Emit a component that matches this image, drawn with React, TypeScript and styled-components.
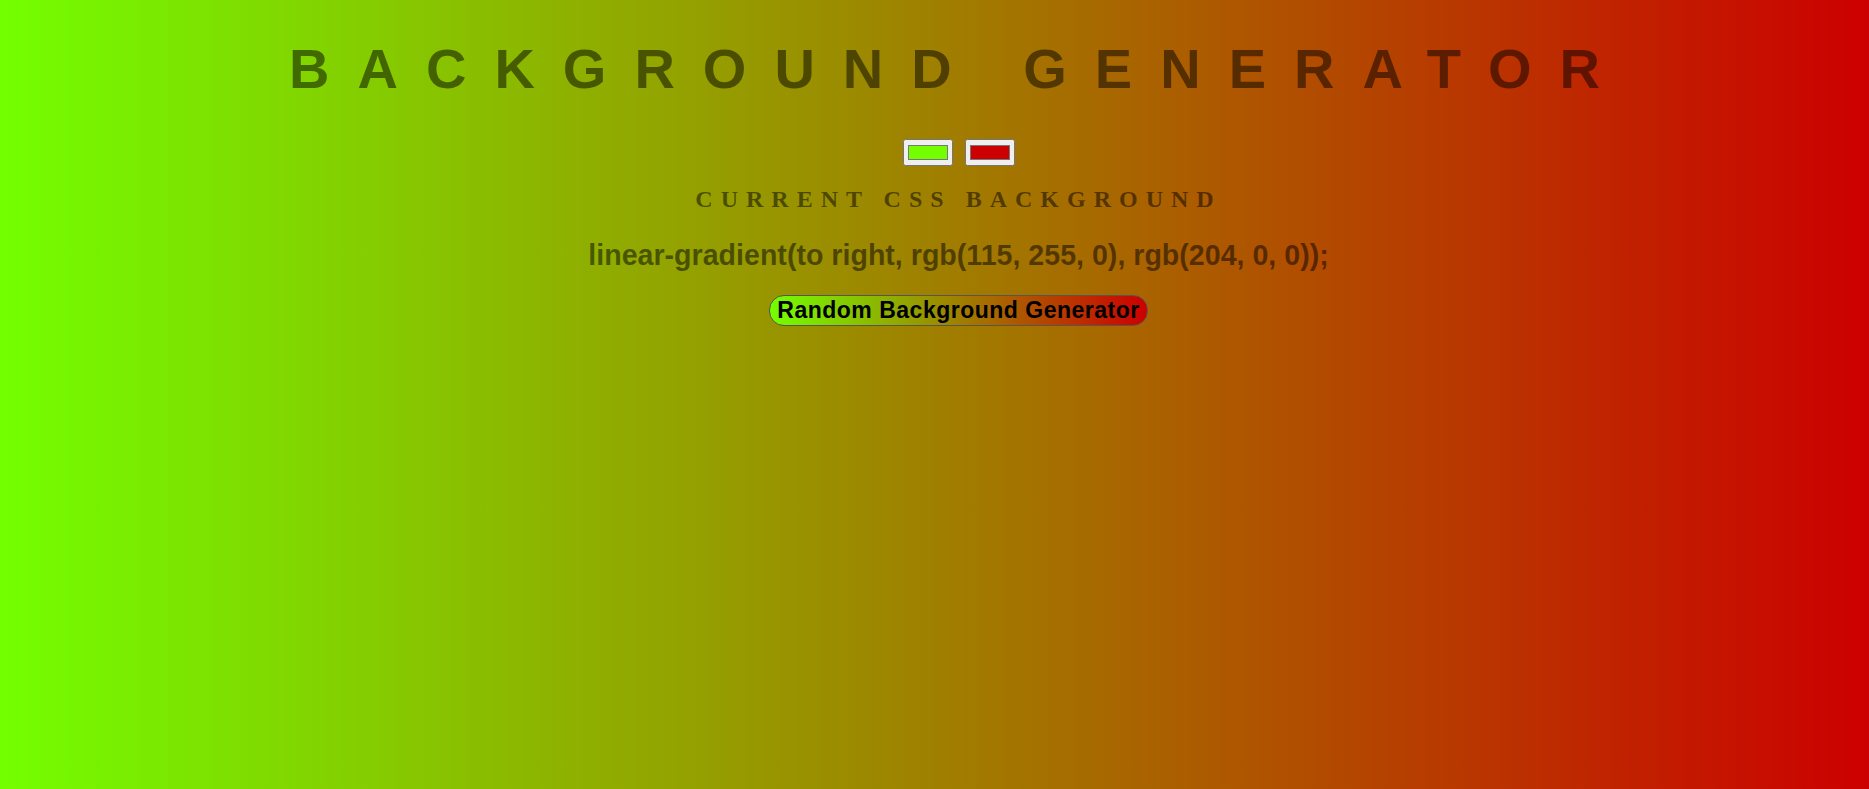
import * as React from "react";
import styled, { createGlobalStyle } from "styled-components";

const GlobalStyle = createGlobalStyle`
  html, body {
    margin: 0;
    padding: 0;
  }
  body {
    font-family: "Liberation Serif", serif;
    letter-spacing: 0.5em;
  }
`;

const Page = styled.div<{ from: string; to: string }>`
  min-height: 100vh;
  box-sizing: border-box;
  padding: 37px 0 0 48px;
  display: flex;
  flex-direction: column;
  align-items: center;
  text-align: center;
  color: rgba(0, 0, 0, 0.5);
  background: linear-gradient(to right, ${(p) => p.from}, ${(p) => p.to});
`;

const Title = styled.h1`
  margin: 0;
  font-family: "Liberation Sans", Arial, sans-serif;
  font-weight: 700;
  font-size: 56px;
  line-height: 64px;
  letter-spacing: 0.5em;
  text-transform: uppercase;
  white-space: nowrap;
`;

const Pickers = styled.div`
  display: flex;
  align-items: center;
  gap: 12px;
  margin-top: 38px;
`;

const ColorInput = styled.input`
  margin: 0;
`;

const Subtitle = styled.h2`
  margin: 20px 0 0;
  font-family: "Liberation Serif", "Times New Roman", serif;
  font-weight: 700;
  font-size: 24px;
  line-height: 27px;
  letter-spacing: 8px;
  text-transform: uppercase;
`;

const CssText = styled.h3`
  margin: 26px 0 0;
  font-family: "Liberation Sans", Arial, sans-serif;
  font-weight: 700;
  font-size: 28.6px;
  line-height: 33px;
  letter-spacing: 0;
  white-space: nowrap;
`;

const RandomButton = styled.button<{ from: string; to: string }>`
  margin-top: 23px;
  padding: 2px 7px;
  font-family: "Liberation Sans", Arial, sans-serif;
  font-weight: 700;
  font-size: 23px;
  line-height: 25px;
  letter-spacing: 0.5px;
  color: #000;
  border: 1px solid #555;
  border-radius: 15px;
  background: linear-gradient(to right, ${(p) => p.from}, ${(p) => p.to});
  cursor: pointer;
`;

const toRgb = (hex: string) => {
  const n = parseInt(hex.slice(1), 16);
  return `rgb(${(n >> 16) & 255}, ${(n >> 8) & 255}, ${n & 255})`;
};

const randomHex = () =>
  "#" +
  Math.floor(Math.random() * 0xffffff)
    .toString(16)
    .padStart(6, "0");

const App: React.FC = () => {
  const [color1, setColor1] = React.useState("#73ff00");
  const [color2, setColor2] = React.useState("#cc0000");

  const css = `linear-gradient(to right, ${toRgb(color1)}, ${toRgb(color2)});`;

  return (
    <>
      <GlobalStyle />
      <Page from={color1} to={color2}>
        <Title>Background Generator</Title>
        <Pickers>
          <ColorInput
            type="color"
            value={color1}
            onChange={(e) => setColor1(e.target.value)}
          />
          <ColorInput
            type="color"
            value={color2}
            onChange={(e) => setColor2(e.target.value)}
          />
        </Pickers>
        <Subtitle>Current CSS Background</Subtitle>
        <CssText>{css}</CssText>
        <RandomButton
          from={color1}
          to={color2}
          onClick={() => {
            setColor1(randomHex());
            setColor2(randomHex());
          }}
        >
          Random Background Generator
        </RandomButton>
      </Page>
    </>
  );
};

export default App;
